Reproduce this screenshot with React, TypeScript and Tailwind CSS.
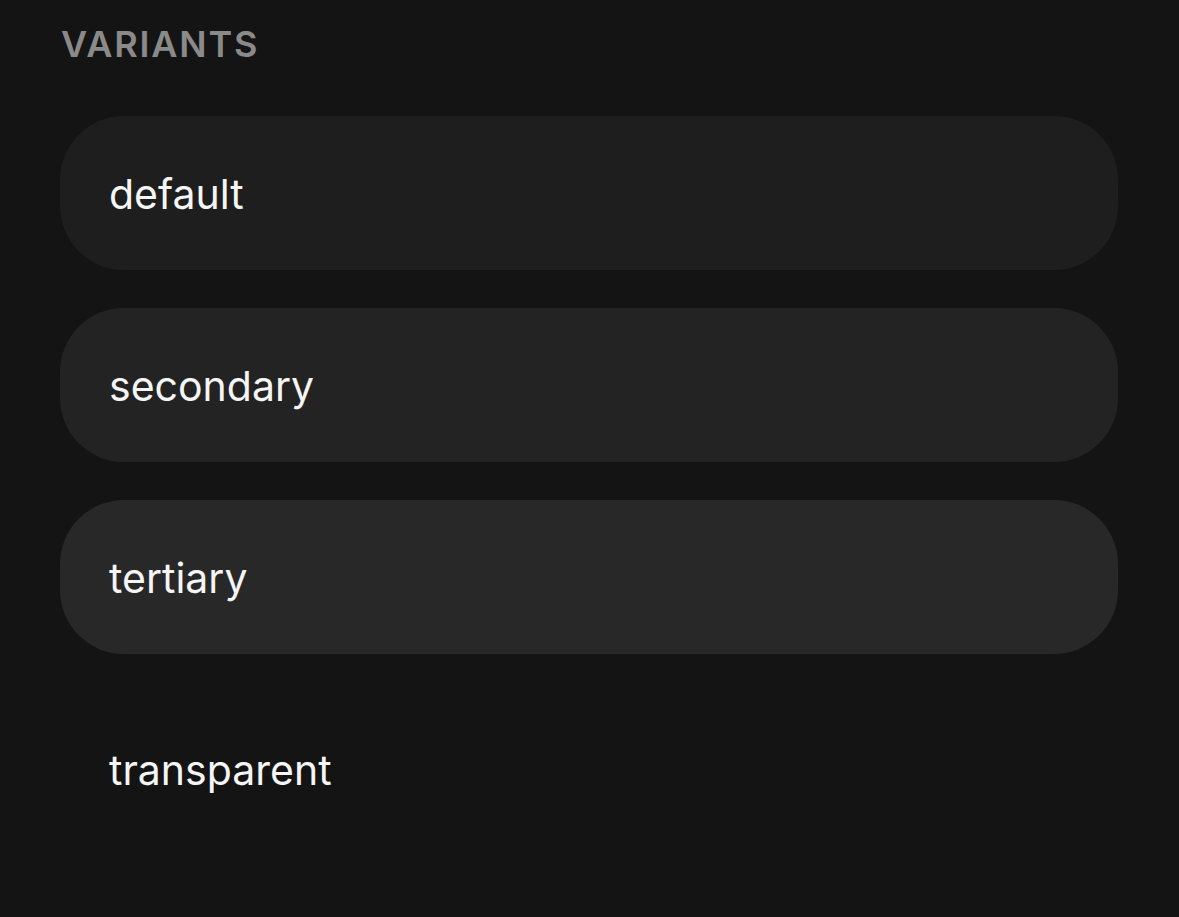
export default function App() {
  const variants = [
    { name: "default", bg: "bg-[#1e1e1e]" },
    { name: "secondary", bg: "bg-[#232323]" },
    { name: "tertiary", bg: "bg-[#282828]" },
    { name: "transparent", bg: "bg-transparent" },
  ];

  return (
    <div className="min-h-[917px] bg-[#141414] px-[60px] pt-[24px] font-['Inter',sans-serif]">
      <h2 className="text-[36px] leading-[40px] font-semibold tracking-[0.05em] text-[#8a8a8a] pl-[1px]">
        VARIANTS
      </h2>
      <div className="mt-[52px] flex flex-col gap-[38px] w-[1058px]">
        {variants.map((v) => (
          <button
            key={v.name}
            className={`h-[154px] rounded-[64px] ${v.bg} flex items-center pl-[49px] pt-[4px] text-left text-[41px] text-[#f5f5f5]`}
          >
            {v.name}
          </button>
        ))}
      </div>
    </div>
  );
}
